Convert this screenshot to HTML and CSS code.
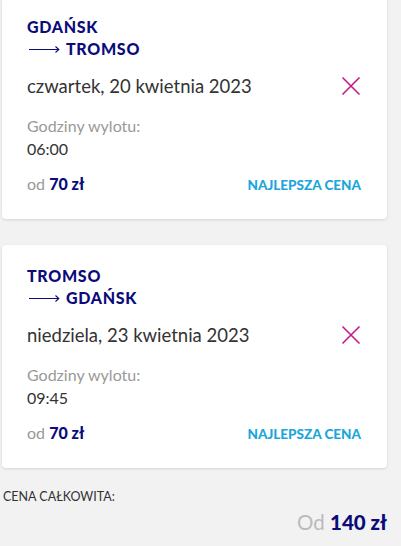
FILE: index.html
```html
<!DOCTYPE html>
<html lang="pl">
<head>
    <meta charset="UTF-8">
    <meta name="viewport" content="width=device-width, initial-scale=1.0">
    <title>Podsumowanie lotu</title>
    <link rel="stylesheet" href="styles.css">
</head>
<body>
    <div class="trip">
        <div class="flight-card first">
            <div class="route">
                <div class="city">GDAŃSK</div>
                <div class="city to">
                    <svg class="arrow" width="31" height="10" viewBox="0 0 31 10"><path d="M0 5.5H29.5M26.5 2.5L29.8 5.5L26.5 8.5" fill="none" stroke="#0b0b7a" stroke-width="1.1"/></svg>
                    TROMSO
                </div>
            </div>
            <div class="date-row">
                <span class="date">czwartek, 20 kwietnia 2023</span>
                <svg class="remove" width="20" height="20" viewBox="0 0 20 20"><path d="M1.5 1.5L18.5 18.5M18.5 1.5L1.5 18.5" stroke="#c21b86" stroke-width="1.6"/></svg>
            </div>
            <div class="label">Godziny wylotu:</div>
            <div class="time">06:00</div>
            <div class="price-row">
                <span class="price"><span class="from">od</span> <b>70 zł</b></span>
                <span class="best">NAJLEPSZA CENA</span>
            </div>
        </div>

        <div class="flight-card">
            <div class="route">
                <div class="city">TROMSO</div>
                <div class="city to">
                    <svg class="arrow" width="31" height="10" viewBox="0 0 31 10"><path d="M0 5.5H29.5M26.5 2.5L29.8 5.5L26.5 8.5" fill="none" stroke="#0b0b7a" stroke-width="1.1"/></svg>
                    GDAŃSK
                </div>
            </div>
            <div class="date-row">
                <span class="date">niedziela, 23 kwietnia 2023</span>
                <svg class="remove" width="20" height="20" viewBox="0 0 20 20"><path d="M1.5 1.5L18.5 18.5M18.5 1.5L1.5 18.5" stroke="#c21b86" stroke-width="1.6"/></svg>
            </div>
            <div class="label">Godziny wylotu:</div>
            <div class="time">09:45</div>
            <div class="price-row">
                <span class="price"><span class="from">od</span> <b>70 zł</b></span>
                <span class="best">NAJLEPSZA CENA</span>
            </div>
        </div>
    </div>

    <div class="total">
        <div class="total-label">CENA CAŁKOWITA:</div>
        <div class="total-price"><span class="from">Od</span> <b>140 zł</b></div>
    </div>
</body>
</html>
```

FILE: styles.css
```css
body {
    margin: 0;
    background: #f2f2f2;
    font-family: 'Lato', 'Noto Sans', sans-serif;
    color: #333;
    width: 401px;
    height: 546px;
    overflow: hidden;
}

.trip {
    display: flex;
    flex-direction: column;
    gap: 26px;
    padding: 0 14px 0 2px;
}

.flight-card {
    background: #fff;
    border-radius: 4px;
    box-shadow: 0 1px 3px rgba(0, 0, 0, 0.12);
    padding: 20px 26px 26px 25px;
}

.flight-card.first {
    margin-top: -4px;
}

.route {
    color: #0b0b7a;
    font-weight: 900;
    font-size: 16px;
    letter-spacing: 0.7px;
    line-height: 21px;
}

.city.to {
    display: flex;
    align-items: center;
    gap: 6px;
    margin-top: 1px;
}

.arrow {
    margin-left: 2px;
}

.date-row {
    display: flex;
    justify-content: space-between;
    align-items: center;
    margin-top: 14px;
}

.date {
    font-size: 18.5px;
    line-height: 26px;
}

.label {
    margin-top: 16px;
    color: #999;
    font-size: 16px;
    line-height: 22px;
}

.time {
    font-size: 16px;
    line-height: 22px;
    margin-top: 1px;
}

.price-row {
    display: flex;
    justify-content: space-between;
    align-items: baseline;
    margin-top: 14px;
}

.price {
    font-size: 16px;
}

.from {
    color: #999;
}

.price b {
    color: #0b0b7a;
    font-weight: 900;
}

.best {
    color: #1ba6db;
    font-weight: 900;
    font-size: 13.5px;
}

.total {
    padding: 21px 14px 0 3px;
}

.total-label {
    font-size: 12.5px;
    color: #333;
}

.total-price {
    text-align: right;
    font-size: 20.5px;
    margin-top: 6px;
}

.total-price .from {
    color: #bbb;
}

.total-price b {
    color: #0b0b7a;
    font-weight: 900;
}
```
